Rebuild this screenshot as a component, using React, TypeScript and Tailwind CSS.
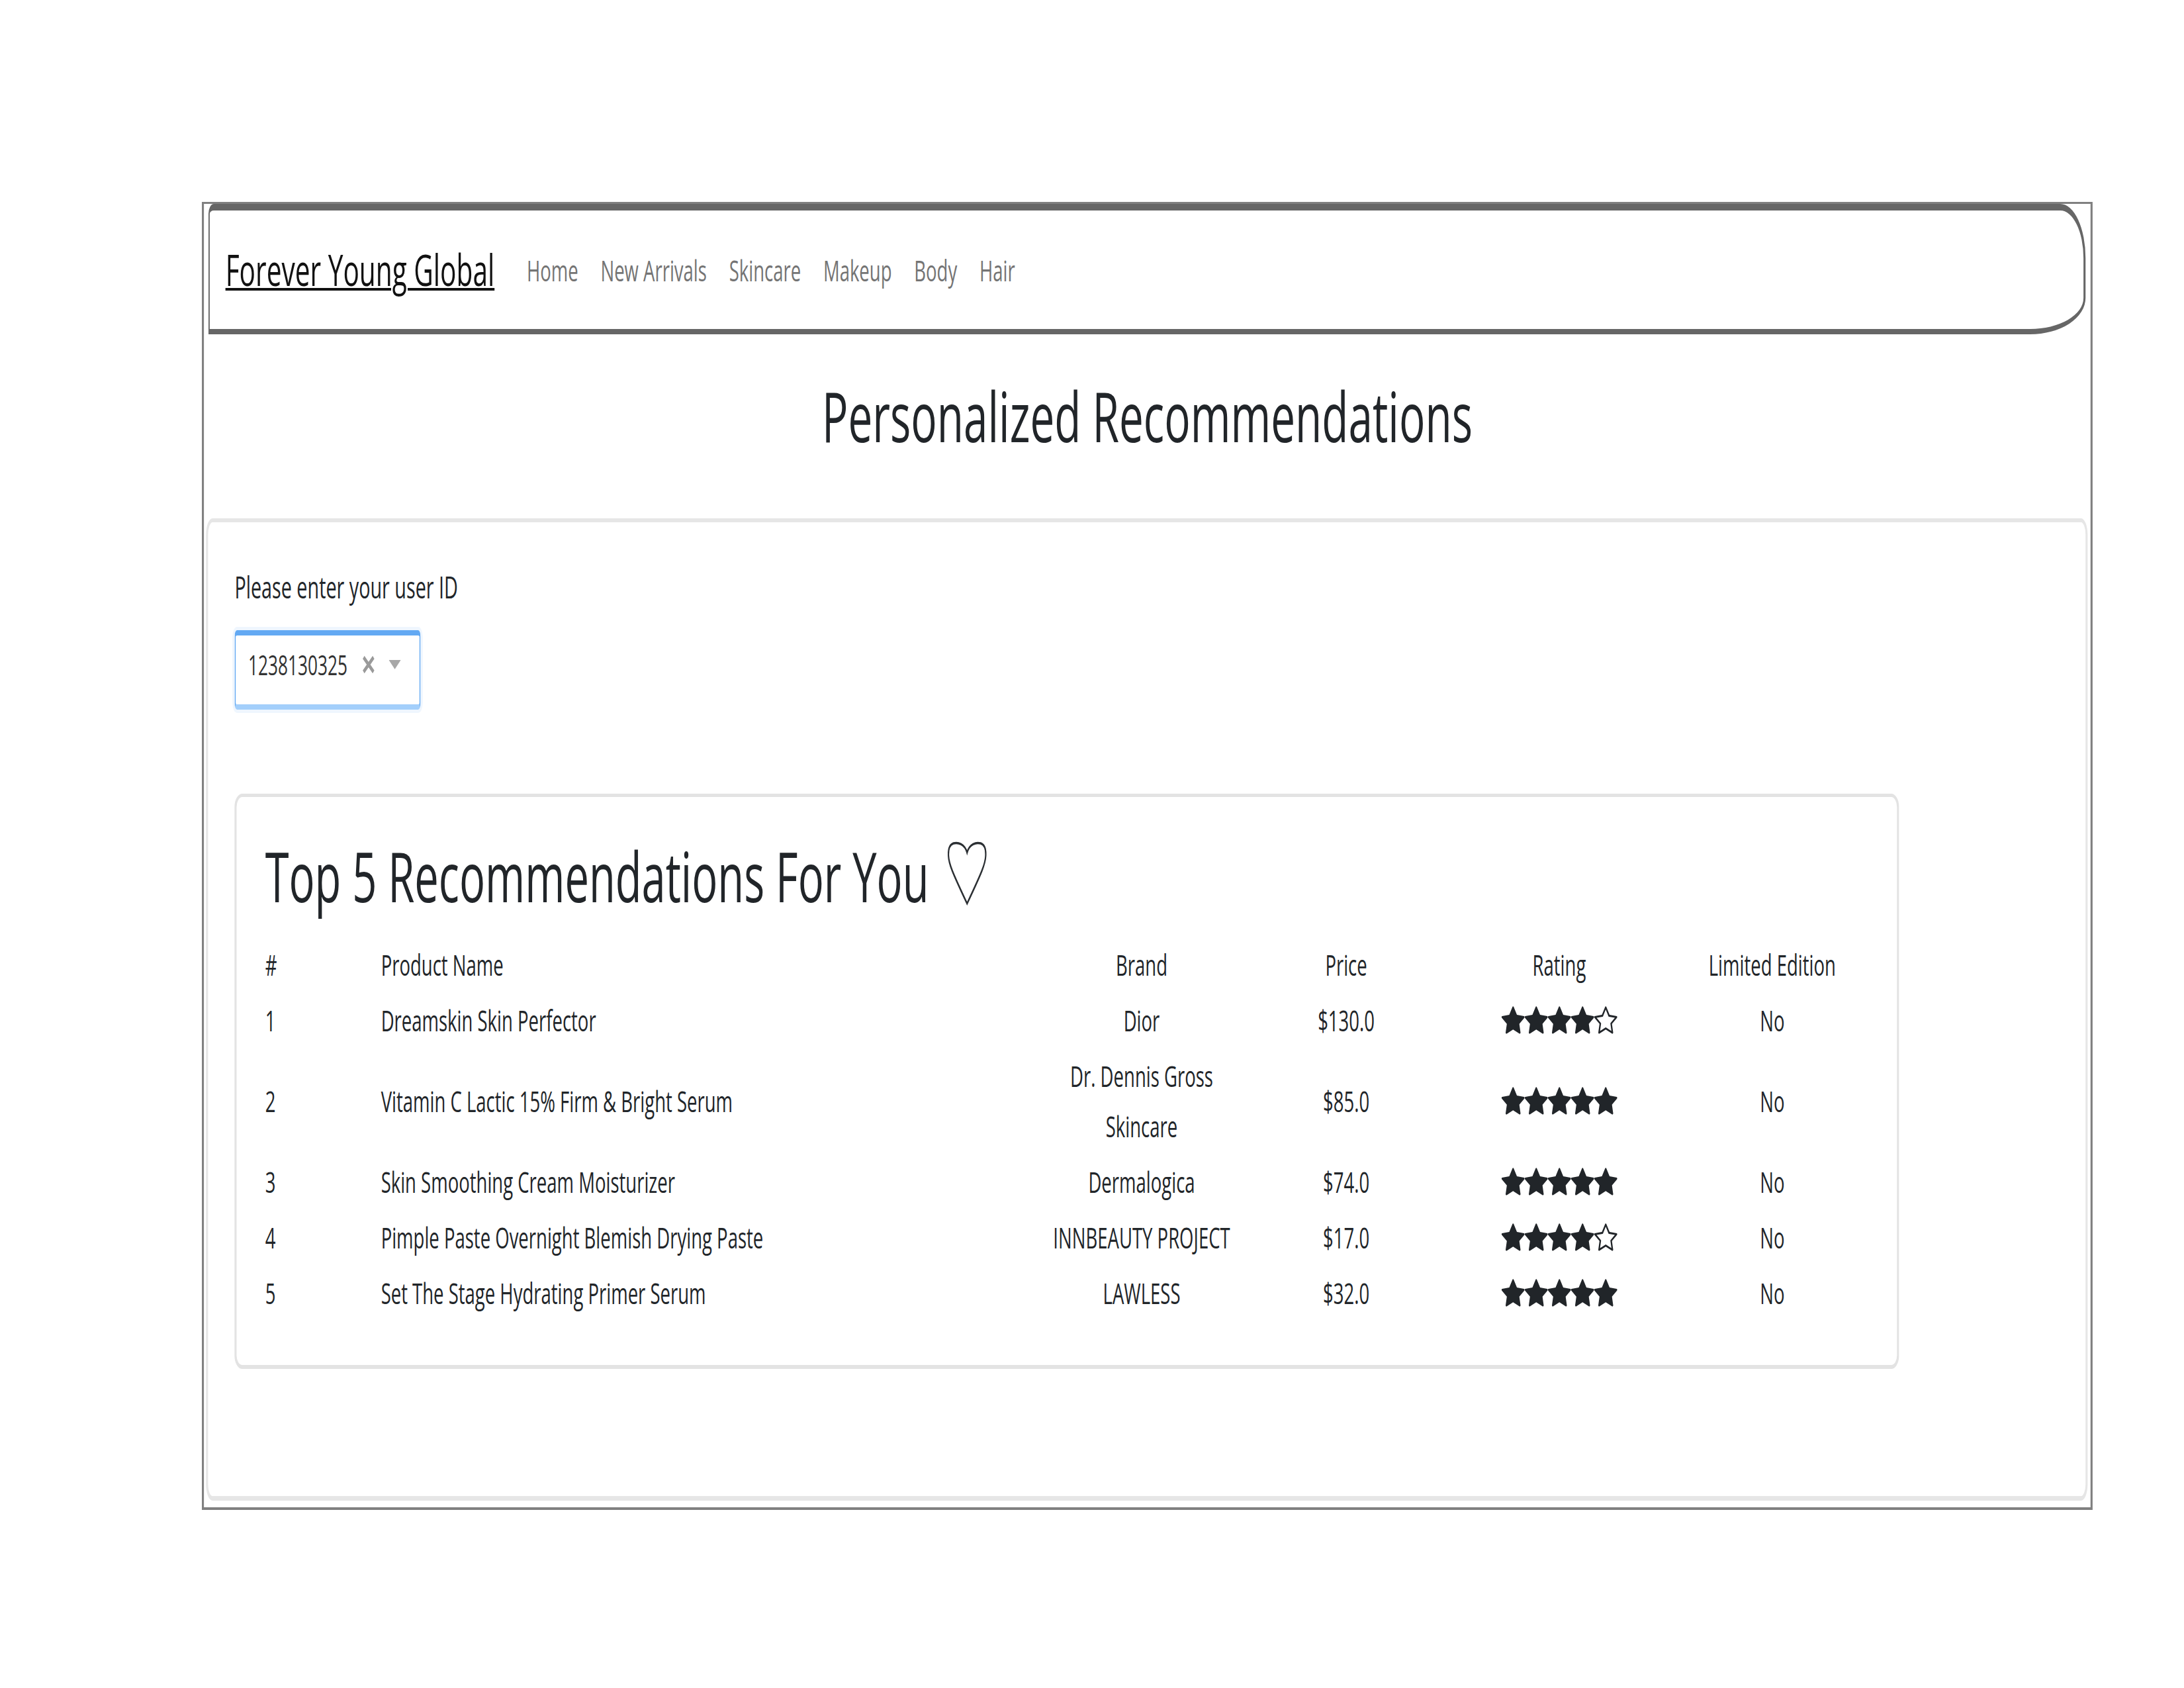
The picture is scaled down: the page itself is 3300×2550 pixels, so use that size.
import { BsStar, BsStarFill } from 'react-icons/bs';

type Row = { id: number; name: string; brand: string[]; price: string; rating: number; limited: string };

const rows: Row[] = [
  { id: 1, name: 'Dreamskin Skin Perfector', brand: ['Dior'], price: '$130.0', rating: 4, limited: 'No' },
  { id: 2, name: 'Vitamin C Lactic 15% Firm & Bright Serum', brand: ['Dr. Dennis Gross', 'Skincare'], price: '$85.0', rating: 5, limited: 'No' },
  { id: 3, name: 'Skin Smoothing Cream Moisturizer', brand: ['Dermalogica'], price: '$74.0', rating: 5, limited: 'No' },
  { id: 4, name: 'Pimple Paste Overnight Blemish Drying Paste', brand: ['INNBEAUTY PROJECT'], price: '$17.0', rating: 4, limited: 'No' },
  { id: 5, name: 'Set The Stage Hydrating Primer Serum', brand: ['LAWLESS'], price: '$32.0', rating: 5, limited: 'No' },
];

const navLinks = ['Home', 'New Arrivals', 'Skincare', 'Makeup', 'Body', 'Hair'];

function Stars({ value }: { value: number }) {
  return (
    <div className="flex h-[76px] items-center justify-center text-[#212529]">
      {[0, 1, 2, 3, 4].map((i) =>
        i < value ? (
          <BsStarFill key={i} className="h-[44px] w-[56px]" preserveAspectRatio="none" />
        ) : (
          <BsStar key={i} className="h-[44px] w-[56px]" preserveAspectRatio="none" />
        )
      )}
    </div>
  );
}

export default function App() {
  return (
    <div className="h-[2550px] w-[3300px] overflow-hidden bg-white">
      {/* the whole page is drawn horizontally condensed, as in the source screenshot */}
      <div className="h-[2550px] w-[5280px] origin-top-left scale-x-[0.625] pt-[305px] font-['Open_Sans',sans-serif] text-[#212529]">
        <div className="ml-[488px] flex h-[1976px] w-[4571px] flex-col border-x-[5px] border-t-[3px] border-b-[4px] border-[#808080]">
          {/* Navbar */}
          <nav className="ml-[11px] flex h-[197px] w-[4538px] items-center rounded-tl-[13px_15px] rounded-tr-[61px_82px] rounded-br-[134px_55px] border-t-[10px] border-b-[8px] border-l-[3px] border-r-[5px] border-[#666666] pl-[38px]">
            <a className="text-[65px] leading-none text-[#111111] underline decoration-[4px] underline-offset-[3px]">
              Forever Young Global
            </a>
            <ul className="ml-[78px] flex gap-[54px] text-[44px] leading-none text-[#747474]">
              {navLinks.map((l) => (
                <li key={l}>{l}</li>
              ))}
            </ul>
          </nav>

          <h2 className="mt-[70px] text-center text-[105px] font-medium leading-none">Personalized Recommendations</h2>

          {/* Main card */}
          <div className="ml-[5px] mt-[103px] h-[1484px] w-[4549px] rounded-[16px/25px] border-x-[5px] border-t-[6px] border-b-[7px] border-[#e6e6e6] pl-[64px] pt-[74px]">
            <label className="block text-[46px] leading-none">Please enter your user ID</label>

            <div className="mt-[43px] flex h-[120px] w-[450px] items-center rounded-[6px/10px] border-x-[3px] border-t-[8px] border-b-[8px] border-[#63a9f3] border-b-[#a3cffb] pb-[16px] pl-[30px] shadow-[0_0_0_5px_rgba(120,180,245,0.12)]">
              <span className="text-[42px] leading-none text-[#333333]">1238130325</span>
              <svg className="ml-[34px] h-[32px] w-[34px]" viewBox="0 0 34 32">
                <path d="M5 5 L29 27 M29 5 L5 27" stroke="#9a9a9a" strokeWidth="6" />
              </svg>
              <svg className="ml-[32px] h-[14px] w-[29px]" viewBox="0 0 29 14" preserveAspectRatio="none">
                <polygon points="0,0 29,0 14.5,14" fill="#a8a8a8" />
              </svg>
            </div>

            {/* Recommendations card */}
            <div className="mt-[127px] w-[4024px] rounded-[19px/20px] border-x-[5px] border-t-[5px] border-b-[6px] border-[#e3e3e3] px-[69px] pb-[67px] pt-[67px]">
              <div className="flex items-start">
                <h3 className="text-[104px] font-medium leading-none">Top 5 Recommendations For You</h3>
                <svg className="ml-[43px] h-[97px] w-[98px]" viewBox="0 0 61 97" preserveAspectRatio="none">
                  <path
                    d="M30.5 17 C27 4 17 1 10 3 C4 5 2 12 2.5 22 C3 34 8 46 30.5 94 C53 46 58 34 58.5 22 C59 12 57 5 51 3 C44 1 34 4 30.5 17 Z"
                    fill="none"
                    stroke="#2b2f33"
                    strokeWidth="3.5"
                    strokeLinejoin="miter"
                    vectorEffect="non-scaling-stroke"
                  />
                </svg>
              </div>

              <table className="mt-[40px] w-full table-fixed border-collapse text-[44px]">
                <colgroup>
                  <col className="w-[280px]" />
                  <col className="w-[1578px]" />
                  <col className="w-[522px]" />
                  <col className="w-[467px]" />
                  <col className="w-[563px]" />
                  <col className="w-[467px]" />
                </colgroup>
                <thead>
                  <tr className="leading-[76px]">
                    <th className="py-[4px] text-left font-normal">#</th>
                    <th className="py-[4px] text-left font-normal">Product Name</th>
                    <th className="py-[4px] text-center font-normal">Brand</th>
                    <th className="py-[4px] text-center font-normal">Price</th>
                    <th className="py-[4px] text-center font-normal">Rating</th>
                    <th className="py-[4px] text-center font-normal">Limited Edition</th>
                  </tr>
                </thead>
                <tbody>
                  {rows.map((r) => (
                    <tr key={r.id} className="leading-[76px]">
                      <td className="py-[4px] align-middle">{r.id}</td>
                      <td className="py-[4px] align-middle">{r.name}</td>
                      <td className="py-[4px] text-center align-middle">
                        {r.brand.map((b, i) => (
                          <div key={i}>{b}</div>
                        ))}
                      </td>
                      <td className="py-[4px] text-center align-middle">{r.price}</td>
                      <td className="py-[4px] align-middle">
                        <Stars value={r.rating} />
                      </td>
                      <td className="py-[4px] text-center align-middle">{r.limited}</td>
                    </tr>
                  ))}
                </tbody>
              </table>
            </div>
          </div>
        </div>
      </div>
    </div>
  );
}
